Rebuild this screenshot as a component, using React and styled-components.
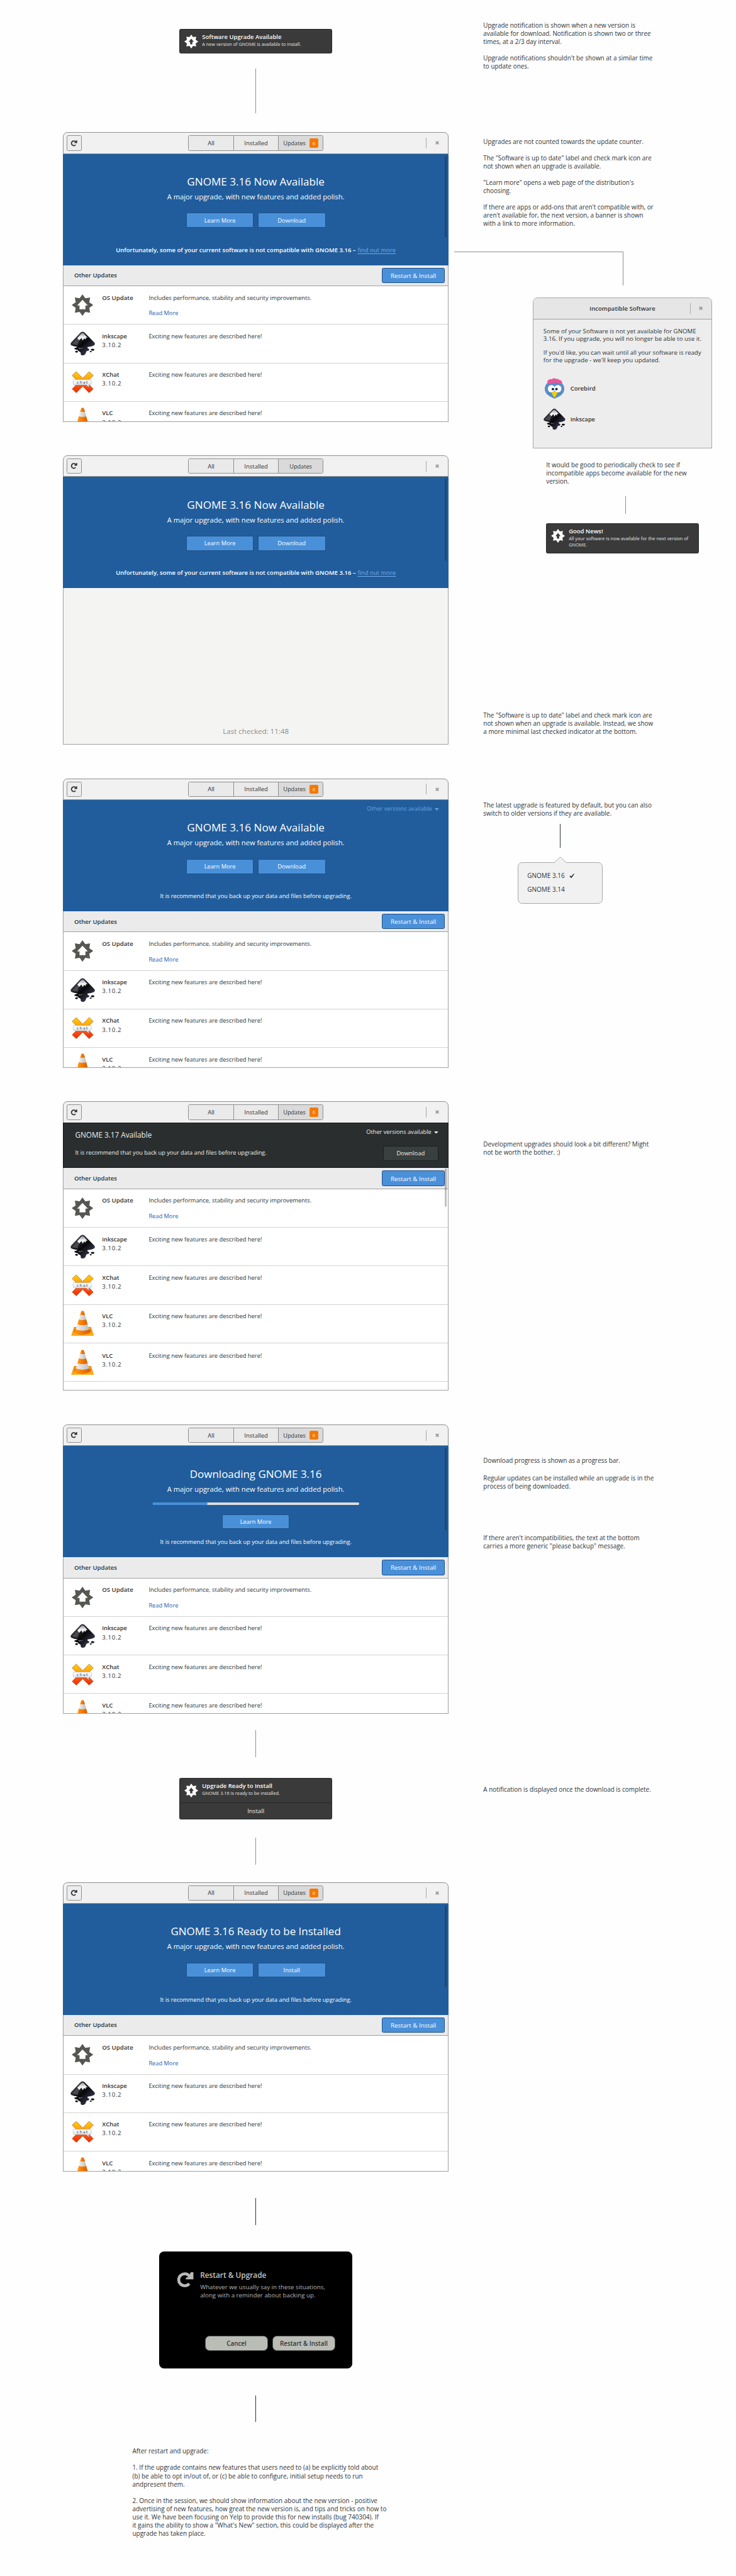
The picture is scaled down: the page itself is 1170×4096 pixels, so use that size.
import React from 'react';
import styled, { createGlobalStyle, css } from 'styled-components';

/* 1rem is ten design units, so 1.4rem reads as 14 units of the mockup board. */
const GlobalStyle = createGlobalStyle`
  html { font-size: 7.134146px; }
  body { margin: 0; background: #fefefe; }
  *, *::before, *::after { box-sizing: border-box; }
  #root {
    font-family: "Open Sans", "Noto Sans", sans-serif;
    font-size: 1.3rem;
    color: #2e3436;
  }
`;

const Board = styled.main`
  display: grid;
  grid-template-columns: 101.1rem 62.9rem;
  width: 164rem;
  height: 574rem;
  overflow: hidden;
  background: #fefefe;
`;

const FlowColumn = styled.div`
  display: flex;
  flex-direction: column;
  align-items: center;
  padding: 6.5rem 0 0 12.9rem;
`;

const NotesColumn = styled.div`
  display: flex;
  flex-direction: column;
  align-items: flex-start;
  padding-top: 4.65rem;
`;

const Note = styled.p`
  margin: ${(p) => p.$gap || 0}rem 0 -0.13rem ${(p) => p.$indent ?? 6.6}rem;
  padding-top: 0.13rem;
  font-size: ${(p) => p.$size || 1.39}rem;
  line-height: 1.833rem;
  white-space: pre;
  ${(p) => p.$start && css`align-self: flex-start;`}
`;

const Connector = styled.div`
  width: 1px;
  height: ${(p) => p.$length}rem;
  margin: ${(p) => p.$gap}rem 0 0 ${(p) => p.$indent || 0}rem;
  background: ${(p) => (p.$dark ? '#2e3436' : '#8f8f8f')};
  flex: none;
`;

const ElbowConnector = styled.div`
  width: 37.75rem;
  height: 7.5rem;
  margin: 5.43rem 0 0 0.1rem;
  border: solid #8f8f8f;
  border-width: 1px 1px 0 0;
`;

/* ---------- notifications ---------- */

const Bubble = styled.section`
  flex: none;
  width: 34rem;
  height: ${(p) => p.$height}rem;
  margin: ${(p) => p.$gap || 0}rem 0 0 ${(p) => p.$indent || 0}rem;
  display: flex;
  flex-direction: column;
  border: 1px solid #25292a;
  border-radius: 0.35rem;
  background: #3a3a3a;
  color: #eeeeec;
`;

const BubbleBody = styled.div`
  display: flex;
  height: 5.35rem;
  padding: 0.95rem 0 0 0.9rem;
  gap: 0.9rem;

  svg { width: 3.1rem; height: 3.1rem; margin-top: 0.1rem; flex: none; }
`;

const BubbleTitle = styled.h3`
  margin: -0.15rem 0 0;
  font-size: ${(p) => p.$size || 1.325}rem;
  font-weight: 600;
  line-height: 1.8rem;
  color: #fff;
  white-space: nowrap;
`;

const BubbleText = styled.p`
  margin: 0.05rem 0 0;
  font-size: 1.026rem;
  line-height: 1.34rem;
  white-space: pre;
  color: #e4e4e2;
`;

const BubbleAction = styled.div`
  flex: 1;
  display: flex;
  align-items: center;
  justify-content: center;
  border-top: 1px solid #25292a;
  font-size: 1.36rem;
`;

/* ---------- application window ---------- */

const Frame = styled.section`
  position: relative;
  flex: none;
  display: flex;
  flex-direction: column;
  width: 86rem;
  height: 64.5rem;
  margin-top: ${(p) => p.$gap}rem;
`;

const HeaderBar = styled.header`
  flex: none;
  display: grid;
  grid-template-columns: 1fr auto 1fr;
  align-items: center;
  height: 4.8rem;
  padding: 0 0.7rem;
  border: 1px solid #8f8f8f;
  border-radius: 1rem 1rem 0 0;
  background: #f1f1f1;
`;

const RefreshButton = styled.button`
  display: flex;
  align-items: center;
  justify-content: center;
  width: 3.4rem;
  height: 3.4rem;
  padding: 0;
  border: 1px solid #8f8f8f;
  border-radius: 0.35rem;
  background: #ededed;
  color: #2e3436;

  svg { width: 1.6rem; height: 1.6rem; }
`;

const Tabs = styled.nav`
  display: flex;
  height: 3.4rem;
  border: 1px solid #8f8f8f;
  border-radius: 0.35rem;
  overflow: hidden;
`;

const Tab = styled.div`
  display: flex;
  align-items: center;
  justify-content: center;
  gap: 0.8rem;
  width: 9.95rem;
  font-size: ${(p) => p.$size}rem;
  background: ${(p) => (p.$active ? '#dadada' : '#eaeaea')};

  & + & { border-left: 1px solid #8f8f8f; }
`;

const Counter = styled.span`
  display: flex;
  align-items: center;
  justify-content: center;
  width: 2rem;
  height: 2rem;
  border-radius: 0.35rem;
  background: #f57900;
  color: #fde3c6;
  font-size: 1.05rem;
`;

const WindowControls = styled.div`
  display: flex;
  align-items: center;
  justify-content: flex-end;
  gap: ${(p) => p.$space || 1.9}rem;
  padding-right: ${(p) => p.$inset || 1.3}rem;
  color: #8d8d8a;

  &::before {
    content: '';
    width: 1px;
    height: 2.4rem;
    background: #a9a9a9;
  }

  svg { width: 0.86rem; height: 0.86rem; }
`;

const Hero = styled.div`
  position: relative;
  flex: none;
  display: flex;
  flex-direction: column;
  align-items: center;
  height: 24.8rem;
  padding-top: 4.67rem;
  background: #215d9c;
  color: #fff;
`;

const HeroTitle = styled.h1`
  margin: 0;
  font-size: ${(p) => p.$size || 2.4}rem;
  font-weight: 400;
  line-height: 3.2rem;
  white-space: nowrap;
`;

const HeroSubtitle = styled.p`
  margin: 0.62rem 0 0;
  font-size: 1.565rem;
  line-height: 2.2rem;
  white-space: nowrap;
`;

const ButtonRow = styled.div`
  display: flex;
  gap: 0.9rem;
  margin-top: ${(p) => p.$gap || 2.45}rem;
`;

const Button = styled.button`
  display: flex;
  align-items: center;
  justify-content: center;
  width: ${(p) => p.$width || 15.1}rem;
  height: ${(p) => p.$height || 3.35}rem;
  padding: 0;
  border: 1px solid ${(p) => (p.$dark ? '#1b1f20' : p.$edge || '#1c5187')};
  border-radius: 0.35rem;
  background: ${(p) => (p.$dark ? '#393f3f' : '#4a90d9')};
  color: ${(p) => (p.$dark ? '#eeeeec' : '#fff')};
  font-family: inherit;
  font-size: ${(p) => p.$size || 1.32}rem;
  white-space: nowrap;
`;

const ProgressTrack = styled.div`
  width: 46rem;
  height: 0.65rem;
  margin-top: 1.85rem;
  border-radius: 0.3rem;
  background: #dcdcdc;
  overflow: hidden;
`;

const ProgressFill = styled.div`
  width: 26.7%;
  height: 100%;
  border-radius: 0.3rem;
  background: #4a90d9;
`;

const Advice = styled.p`
  display: flex;
  gap: 0.4rem;
  margin: ${(p) => p.$gap || 4.15}rem 0 0;
  font-size: ${(p) => (p.$strong ? 1.337 : 1.289)}rem;
  font-weight: ${(p) => (p.$strong ? 600 : 400)};
  line-height: 1.8rem;
  white-space: nowrap;
`;

const InlineLink = styled.a`
  font-size: 1.328rem;
  font-weight: 400;
  color: #74abe6;
  text-decoration: underline;
  text-decoration-thickness: 1px;
  text-underline-offset: 0.35rem;
`;

const VersionPicker = styled.div`
  display: flex;
  align-items: center;
  gap: 0.6rem;
  font-size: 1.292rem;
  line-height: 1.8rem;
  color: ${(p) => (p.$light ? '#eeeeec' : '#66a3e4')};
  white-space: nowrap;

  svg { width: 0.95rem; height: 0.55rem; }
`;

const CornerPicker = styled(VersionPicker)`
  position: absolute;
  top: 1.2rem;
  right: 2.2rem;
`;

const DevBanner = styled.div`
  flex: none;
  display: flex;
  justify-content: space-between;
  height: 10.2rem;
  margin-top: -1px;
  padding: 1.2rem 2.2rem 0 2.6rem;
  border: 1px solid #16191a;
  background: #2a2e2f;
  color: #eeeeec;
`;

const DevText = styled.div`
  padding-top: 0.4rem;
`;

const DevTitle = styled.h2`
  margin: 0;
  font-size: 1.647rem;
  font-weight: 400;
  line-height: 2.2rem;
`;

const DevActions = styled.div`
  display: flex;
  flex-direction: column;
  align-items: flex-end;
  gap: 2.1rem;
`;

const Pane = styled.div`
  flex: 1;
  min-height: 0;
  overflow: hidden;
  border: 1px solid #a0a0a0;
  border-top: 0;
  background: ${(p) => (p.$idle ? '#f4f4f3' : '#fff')};
`;

const IdlePane = styled(Pane)`
  display: flex;
  align-items: flex-end;
  justify-content: center;
  padding-bottom: 1.8rem;
  font-size: 1.62rem;
  line-height: 2.2rem;
  color: #8d8d8a;
`;

const SectionBar = styled.div`
  display: flex;
  align-items: center;
  justify-content: space-between;
  height: 4.7rem;
  padding: 0 0.75rem 0 2.4rem;
  border-bottom: 1px solid #a0a0a0;
  background: #ebebeb;
  font-size: 1.34rem;
  font-weight: 600;
`;

const UpdateRow = styled.article`
  display: grid;
  grid-template-columns: 8.6rem 10.4rem 1fr;
  height: 8.59rem;
  border-bottom: 1px solid #d3d3d3;
  padding-top: ${(p) => p.$shift || 0}rem;
  font-size: 1.315rem;
  line-height: 1.97rem;
`;

const RowIcon = styled.div`
  display: flex;
  align-items: center;
  justify-content: center;

  svg { width: ${(p) => p.$w}rem; height: ${(p) => p.$h}rem; margin-top: ${(p) => p.$lift || 0}rem; }
`;

const RowCell = styled.div`
  padding-top: 1.62rem;
  white-space: nowrap;
`;

const AppName = styled.div`
  font-size: ${(p) => p.$size || 1.34}rem;
  font-weight: 600;
`;

const AppVersion = styled.div`
  font-size: 1.36rem;
  letter-spacing: 0.09rem;
`;

const ReadMore = styled.a`
  display: block;
  margin-top: 1.5rem;
  font-size: 1.3rem;
  color: #2a5ca8;
`;

const Scrollbar = styled.div`
  position: absolute;
  top: ${(p) => p.$top}rem;
  right: 0.5rem;
  width: 0.45rem;
  height: ${(p) => p.$length}rem;
  border-radius: ${(p) => (p.$grey ? '0 0 0.2rem 0.2rem' : '0.2rem')};
  background: ${(p) => (p.$grey ? 'rgba(0, 0, 0, 0.25)' : '#1a4879')};
`;

/* ---------- incompatible software dialog ---------- */

const Dialog = styled.section`
  flex: none;
  width: 40rem;
  height: 33.7rem;
  margin: 2.7rem 0 0 17.6rem;
  border: 1px solid #a8a8a8;
  border-radius: 1rem 1rem 0 0;
  background: #ededed;
  overflow: hidden;
`;

const DialogHeader = styled.header`
  display: grid;
  grid-template-columns: 1fr auto 1fr;
  align-items: center;
  height: 4.75rem;
  border-bottom: 1px solid #a0a0a0;
  background: #e6e6e6;
  font-size: 1.34rem;
  font-weight: 600;
`;

const DialogBody = styled.div`
  padding: 1.8rem 0 0 2.25rem;
`;

const DialogText = styled.p`
  margin: 0 0 1.22rem;
  font-size: ${(p) => p.$size}rem;
  line-height: 1.78rem;
  white-space: pre;
`;

const AppEntry = styled.div`
  display: flex;
  align-items: center;
  height: 5rem;
  margin-top: ${(p) => p.$gap}rem;
  font-size: ${(p) => p.$size || 1.34}rem;
  font-weight: 600;
`;

const EntryIcon = styled.span`
  display: flex;
  justify-content: center;
  width: 5rem;
  margin-right: 1rem;

  svg { width: ${(p) => p.$w}rem; height: ${(p) => p.$h}rem; }
`;

/* ---------- version popover ---------- */

const Popover = styled.div`
  position: relative;
  width: 18.9rem;
  height: 9.3rem;
  margin: 3.2rem 0 0 14.3rem;
  padding: 1.4rem 0 0 1.95rem;
  border: 1px solid #a8a8a8;
  border-radius: 1rem;
  background: #f1f1f1;
`;

const PopoverTip = styled.svg`
  position: absolute;
  top: -1.4rem;
  left: 7.85rem;
  width: 3rem;
  height: 1.55rem;
`;

const PopoverItem = styled.div`
  display: flex;
  align-items: center;
  gap: 1rem;
  font-size: 1.407rem;
  line-height: 3.07rem;

  svg { width: 1.15rem; height: 1.05rem; }
`;

/* ---------- session dialog ---------- */

const SessionDialog = styled.section`
  flex: none;
  display: flex;
  flex-direction: column;
  width: 43rem;
  height: 26rem;
  margin-top: 6rem;
  padding: 4.1rem 3.8rem 3.95rem 3.7rem;
  border-radius: 1.1rem;
  background: #000;
  color: #b4b4b2;
`;

const SessionMessage = styled.div`
  flex: 1;
  display: flex;
  gap: 1.3rem;

  svg { width: 4.1rem; height: 4.1rem; color: #b9b9b7; }
`;

const SessionTitle = styled.h2`
  margin: 0;
  font-size: 1.66rem;
  font-weight: 600;
  line-height: 2.2rem;
  color: #c6c6c4;
`;

const SessionText = styled.p`
  margin: 0.6rem 0 0;
  font-size: 1.366rem;
  line-height: 1.83rem;
  white-space: pre;
`;

const SessionActions = styled.div`
  display: flex;
  justify-content: flex-end;
  gap: 1rem;
`;

const PillButton = styled.button`
  width: 14rem;
  height: 3.35rem;
  padding: 0;
  border: 1px solid #50544f;
  border-radius: 1rem;
  background: #babdb6;
  color: #2e3436;
  font-family: inherit;
  font-size: 1.38rem;
  font-weight: 600;
`;

/* ---------- icons ---------- */

const starPoints = (radius, inner) =>
  Array.from({ length: 16 }, (_, i) => {
    const r = i % 2 ? inner : radius;
    const a = (i * Math.PI) / 8;
    return `${(24 + r * Math.sin(a)).toFixed(2)},${(24 - r * Math.cos(a)).toFixed(2)}`;
  }).join(' ');

const UpdateStar = ({ fill, arrow, narrow }) => (
  <svg viewBox="0 0 48 48">
    <polygon points={starPoints(24, 16.4)} fill={fill} />
    <path
      d={narrow
        ? 'M24 14.2L33 25H27.8V33.4H20.2V25H15Z'
        : 'M24 12.2L36 25H30.6V33.4H17.4V25H12Z'}
      fill={arrow}
    />
  </svg>
);

const RefreshIcon = () => (
  <svg viewBox="0 0 16 16" fill="none">
    <path d="M11.4 11.6A5.2 5.2 0 1 1 11.7 5.2" stroke="currentColor" strokeWidth="2.5" />
    <path d="M15 1.6V7.8H8.4V6.6L10.6 5.6L12.8 1.6Z" fill="currentColor" />
  </svg>
);

const CloseIcon = () => (
  <svg viewBox="0 0 10 10">
    <path d="M1.2 1.2L8.8 8.8M8.8 1.2L1.2 8.8" stroke="currentColor" strokeWidth="2.4" />
  </svg>
);

const CaretIcon = () => (
  <svg viewBox="0 0 10 6"><path d="M0 0H10L5 6Z" fill="currentColor" /></svg>
);

const CheckIcon = () => (
  <svg viewBox="0 0 12 11">
    <path d="M0.5 6.6L2.4 4.7L4.6 6.6L9.6 0.6L11.8 0.9L5.2 10.2H4.2Z" fill="#2e3436" />
  </svg>
);

const InkscapeIcon = () => (
  <svg viewBox="0 0 55 54">
    <defs>
      <linearGradient id="inkBody" x1="0" y1="0" x2="1" y2="1">
        <stop offset="0.2" stopColor="#3a3a40" />
        <stop offset="0.5" stopColor="#08080a" />
        <stop offset="0.8" stopColor="#34364a" />
        <stop offset="1" stopColor="#0a0a0e" />
      </linearGradient>
      <linearGradient id="inkSnow" x1="0" y1="0" x2="0" y2="1">
        <stop offset="0" stopColor="#8e9096" />
        <stop offset="0.5" stopColor="#e8eaec" />
        <stop offset="1" stopColor="#ffffff" />
      </linearGradient>
    </defs>
    <path
      d="M22.6 2.6Q27 -1.2 31.4 2.6L53 24.6Q56.4 28.8 52 31.6Q46 34 38.5 34.8Q36.4 36.4 40.4 38.6Q44 41 40 43.2Q35 43.6 34.6 47Q33.4 52.6 28 53.4Q22.4 53 22.8 49.6Q24 47 20 45Q15.6 43.4 16.6 41.4Q12 41.2 9.2 39.2Q7 37.4 12 36.2Q16 35.4 15.4 34.2Q8 33.4 3 31.4Q-1.6 29 1.6 24.6Z"
      fill="url(#inkBody)"
    />
    <path
      d="M24.4 4.6Q27 2.2 29.6 4.6L38.6 14.2L34.6 13.2L34 18L30.4 15.4L27.4 20.2L24.6 14.6L21.6 17.4L19.4 20L15.2 14.6Z"
      fill="url(#inkSnow)"
    />
    <path d="M15.2 15.6L19 21L16 31Q9 30 4.4 27.8Z" fill="#84868e" opacity="0.4" />
    <path d="M17 36.6Q24 38 29 36.2Q26 38.8 19 38.4Z" fill="#c9cace" opacity="0.7" />
    <ellipse cx="49.4" cy="40.8" rx="4" ry="2.2" fill="#101014" />
    <ellipse cx="45.2" cy="45" rx="2.2" ry="1.6" fill="#101014" />
    <ellipse cx="13.6" cy="45.2" rx="3" ry="2" fill="#101014" />
  </svg>
);

const ChatIcon = () => (
  <svg viewBox="0 0 50 50">
    <defs>
      <linearGradient id="chatFill" x1="0" y1="0" x2="0" y2="1">
        <stop offset="0" stopColor="#ffd000" />
        <stop offset="0.42" stopColor="#fb9d12" />
        <stop offset="0.6" stopColor="#fa5a1a" />
        <stop offset="1" stopColor="#f02800" />
      </linearGradient>
      <linearGradient id="chatBubble" x1="0" y1="0" x2="0" y2="1">
        <stop offset="0" stopColor="#ffffff" />
        <stop offset="1" stopColor="#cfdcea" />
      </linearGradient>
    </defs>
    <path
      d="M10.4 1L25 16L39.6 1L49 9.6L34.4 25L49 40.4L39.6 49L25 34.4L10.4 49L1 40.4L15.6 25L1 9.6Z"
      fill="url(#chatFill)"
      stroke="#b0501c"
      strokeWidth="0.9"
    />
    <path
      d="M7 19H41Q45 19 45 23V27Q45 31 41 31H38.6L38.8 36.4L33.4 31H7Q3 31 3 27V23Q3 19 7 19Z"
      fill="url(#chatBubble)"
      stroke="#9fb0c4"
      strokeWidth="0.8"
    />
    <text x="25" y="28" textAnchor="middle" fontFamily="DejaVu Sans, sans-serif" fontSize="8.6" letterSpacing="2" fill="#2e3436">chat</text>
  </svg>
);

const ConeIcon = () => (
  <svg viewBox="0 0 51 56">
    <defs>
      <linearGradient id="coneOrange" x1="0" y1="0" x2="1" y2="0">
        <stop offset="0" stopColor="#ff9a1c" />
        <stop offset="0.5" stopColor="#f57900" />
        <stop offset="1" stopColor="#d65c00" />
      </linearGradient>
      <linearGradient id="coneWhite" x1="0" y1="0" x2="1" y2="0">
        <stop offset="0" stopColor="#f2f2f2" />
        <stop offset="1" stopColor="#bdbfbd" />
      </linearGradient>
      <linearGradient id="coneBase" x1="0" y1="0" x2="0" y2="1">
        <stop offset="0" stopColor="#f58a10" />
        <stop offset="1" stopColor="#ffae1a" />
      </linearGradient>
    </defs>
    <path d="M6.6 36.6H44.4L51 56H0Z" fill="url(#coneBase)" />
    <path d="M8 42L43 42L45 47Q38 53.6 25.5 53.6Q13 53.6 6 47Z" fill="#c85c04" opacity="0.55" />
    <path d="M22.6 1.4Q25.5 -0.8 28.4 1.4L31 9.4Q25.5 11 20 9.4Z" fill="url(#coneOrange)" />
    <path d="M20 9.4Q25.5 11 31 9.4L33.8 19.8Q25.5 22 17.2 19.8Z" fill="url(#coneWhite)" />
    <path d="M17.2 19.8Q25.5 22 33.8 19.8L37 31Q25.5 34.6 14 31Z" fill="url(#coneOrange)" />
    <path d="M14 31Q25.5 34.6 37 31L40.4 42Q25.5 47.6 10.6 42Z" fill="url(#coneWhite)" />
    <path d="M10.6 42Q25.5 47.6 40.4 42L42.4 48Q37 52.2 25.5 52.2Q14 52.2 8.6 48Z" fill="url(#coneOrange)" />
  </svg>
);

const BirdIcon = () => (
  <svg viewBox="0 0 44 46">
    <path d="M22 5C35 5 44 14 44 24C44 36 34 42 22 46C10 42 0 36 0 24C0 14 9 5 22 5Z" fill="#5a8cc6" />
    <circle cx="15" cy="24" r="8.2" fill="#fff" />
    <circle cx="29.4" cy="24" r="8.2" fill="#fff" />
    <circle cx="18.4" cy="25" r="2.9" fill="#16294a" />
    <circle cx="26.4" cy="25" r="2.9" fill="#16294a" />
    <path d="M15.6 32.4Q22 27.6 28.4 32.4Q27.4 39 22 44Q16.6 39 15.6 32.4Z" fill="#ecd30e" />
    <path d="M6 11Q5 5 10 3.4Q12 1.6 16 2.4Q20 -1.4 26 2Q31 1 32.4 4Q39 5 39.4 11Q39 13 36 12.4Q22 8.4 9 12.8Q6.4 13.4 6 11Z" fill="#e8589a" />
  </svg>
);

/* ---------- composition ---------- */

const APPS = {
  os: { name: 'OS Update', size: 1.353, icon: <UpdateStar fill="#555753" arrow="#fff" />, w: 4.8, h: 4.8 },
  inkscape: { name: 'Inkscape', size: 1.3, icon: <InkscapeIcon />, w: 5.5, h: 5.4 },
  xchat: { name: 'XChat', icon: <ChatIcon />, w: 4.9, h: 5 },
  vlc: { name: 'VLC', icon: <ConeIcon />, w: 5.1, h: 5.6, lift: -0.3 },
};

const Update = ({ app, shift }) => {
  const a = APPS[app];
  return (
    <UpdateRow $shift={shift}>
      <RowIcon $w={a.w} $h={a.h} $lift={a.lift}>{a.icon}</RowIcon>
      <RowCell>
        <AppName $size={a.size}>{a.name}</AppName>
        {app !== 'os' && <AppVersion>3.10.2</AppVersion>}
      </RowCell>
      <RowCell>
        {app === 'os' ? (
          <>
            Includes performance, stability and security improvements.
            <ReadMore>Read More</ReadMore>
          </>
        ) : 'Exciting new features are described here!'}
      </RowCell>
    </UpdateRow>
  );
};

const UpdateList = ({ apps = ['os', 'inkscape', 'xchat', 'vlc'] }) => (
  <Pane>
    <SectionBar>
      Other Updates
      <Button $width={14} $height={3.45} $size={1.379} $edge="#1c4f88">Restart &amp; Install</Button>
    </SectionBar>
    {apps.map((app, i) => <Update key={i} app={app} shift={i === 4 ? 0.2 : 0} />)}
  </Pane>
);

const SoftwareWindow = ({ gap, counter = true, children }) => (
  <Frame $gap={gap}>
    <HeaderBar>
      <RefreshButton><RefreshIcon /></RefreshButton>
      <Tabs>
        <Tab $size={1.32}>All</Tab>
        <Tab $size={1.334}>Installed</Tab>
        <Tab $size={1.285} $active>Updates{counter && <Counter>6</Counter>}</Tab>
      </Tabs>
      <WindowControls><CloseIcon /></WindowControls>
    </HeaderBar>
    {children}
  </Frame>
);

const UpgradeHero = ({ title, titleSize, action, actionSize, incompatible, progress, picker }) => (
  <Hero>
    {picker && <CornerPicker>Other versions available<CaretIcon /></CornerPicker>}
    <HeroTitle $size={titleSize}>{title}</HeroTitle>
    <HeroSubtitle>A major upgrade, with new features and added polish.</HeroSubtitle>
    {progress && <ProgressTrack><ProgressFill /></ProgressTrack>}
    <ButtonRow $gap={progress ? 2 : 2.45}>
      <Button $size={1.295}>Learn More</Button>
      {action && <Button $size={actionSize || 1.33}>{action}</Button>}
    </ButtonRow>
    {incompatible ? (
      <Advice $strong>
        Unfortunately, some of your current software is not compatible with GNOME 3.16 –
        <InlineLink>find out more</InlineLink>
      </Advice>
    ) : (
      <Advice $gap={progress ? 2.1 : 4.15}>
        It is recommend that you back up your data and files before upgrading.
      </Advice>
    )}
  </Hero>
);

const Notification = ({ title, titleSize, text, action, ...place }) => (
  <Bubble {...place}>
    <BubbleBody>
      <UpdateStar fill="#fff" arrow="#3a3a3a" narrow />
      <div>
        <BubbleTitle $size={titleSize}>{title}</BubbleTitle>
        <BubbleText>{text}</BubbleText>
      </div>
    </BubbleBody>
    {action && <BubbleAction>{action}</BubbleAction>}
  </Bubble>
);

export default function App() {
  return (
    <>
      <GlobalStyle />
      <Board>
        <FlowColumn>
          <Notification $height={5.4} title="Software Upgrade Available" text="A new version of GNOME is available to install." />
          <Connector $gap={3.4} $length={10} />

          <SoftwareWindow gap={4.2}>
            <UpgradeHero title="GNOME 3.16 Now Available" action="Download" incompatible />
            <UpdateList />
            <Scrollbar $top={5.2} $length={18.3} />
          </SoftwareWindow>

          <SoftwareWindow gap={7.5} counter={false}>
            <UpgradeHero title="GNOME 3.16 Now Available" action="Download" incompatible />
            <IdlePane $idle>Last checked: 11:48</IdlePane>
            <Scrollbar $top={5.2} $length={18.3} />
          </SoftwareWindow>

          <SoftwareWindow gap={7.5}>
            <UpgradeHero title="GNOME 3.16 Now Available" action="Download" picker />
            <UpdateList />
          </SoftwareWindow>

          <SoftwareWindow gap={7.5}>
            <DevBanner>
              <DevText>
                <DevTitle>GNOME 3.17 Available</DevTitle>
                <Advice $gap={2.05}>It is recommend that you back up your data and files before upgrading.</Advice>
              </DevText>
              <DevActions>
                <VersionPicker $light>Other versions available<CaretIcon /></VersionPicker>
                <Button $dark $width={12.3} $size={1.33}>Download</Button>
              </DevActions>
            </DevBanner>
            <UpdateList apps={['os', 'inkscape', 'xchat', 'vlc', 'vlc']} />
            <Scrollbar $grey $top={15} $length={8.5} />
          </SoftwareWindow>

          <SoftwareWindow gap={7.5}>
            <UpgradeHero title="Downloading GNOME 3.16" titleSize={2.379} progress />
            <UpdateList />
            <Scrollbar $top={5.2} $length={18.3} />
          </SoftwareWindow>

          <Connector $gap={3.6} $length={6} />
          <Notification
            $gap={4.7}
            $height={9.2}
            title="Upgrade Ready to Install"
            text="GNOME 3.16 is ready to be installed."
            action="Install"
          />
          <Connector $gap={4.1} $length={6} />

          <SoftwareWindow gap={3.9}>
            <UpgradeHero title="GNOME 3.16 Ready to be Installed" titleSize={2.379} action="Install" />
            <UpdateList />
            <Scrollbar $top={5.2} $length={18.3} />
          </SoftwareWindow>

          <Connector $gap={5.9} $length={6} $dark />
          <SessionDialog>
            <SessionMessage>
              <RefreshIcon />
              <div>
                <SessionTitle>Restart &amp; Upgrade</SessionTitle>
                <SessionText>{'Whatever we usually say in these situations,\nalong with a reminder about backing up.'}</SessionText>
              </div>
            </SessionMessage>
            <SessionActions>
              <PillButton>Cancel</PillButton>
              <PillButton>Restart &amp; Install</PillButton>
            </SessionActions>
          </SessionDialog>
          <Connector $gap={6} $length={6} $dark />

          <Note $start $gap={5.45} $indent={16.6} $size={1.399}>
            {`After restart and upgrade:

1. If the upgrade contains new features that users need to (a) be explicitly told about
(b) be able to opt in/out of, or (c) be able to configure, initial setup needs to run
andpresent them.

2. Once in the session, we should show information about the new version - positive
advertising of new features, how great the new version is, and tips and tricks on how to
use it. We have been focusing on Yelp to provide this for new installs (bug 740304). If
it gains the ability to show a "What's New" section, this could be displayed after the
upgrade has taken place.`}
          </Note>
        </FlowColumn>

        <NotesColumn>
          <Note>
            {`Upgrade notification is shown when a new version is
available for download. Notification is shown two or three
times, at a 2/3 day interval.

Upgrade notifications shouldn't be shown at a similar time
to update ones.`}
          </Note>
          <Note $gap={14.85} $size={1.385}>
            {`Upgrades are not counted towards the update counter.

The "Software is up to date" label and check mark icon are
not shown when an upgrade is available.

"Learn more" opens a web page of the distribution's
choosing.

If there are apps or add-ons that aren't compatible with, or
aren't available for, the next version, a banner is shown
with a link to more information.`}
          </Note>
          <ElbowConnector />
          <Dialog>
            <DialogHeader>
              <span />
              Incompatible Software
              <WindowControls $space={1.8} $inset={2}><CloseIcon /></WindowControls>
            </DialogHeader>
            <DialogBody>
              <DialogText $size={1.36}>{'Some of your Software is not yet available for GNOME\n3.16. If you upgrade, you will no longer be able to use it.'}</DialogText>
              <DialogText $size={1.36}>{"If you'd like, you can wait until all your software is ready\nfor the upgrade - we'll keep you updated."}</DialogText>
              <AppEntry $gap={2.7}><EntryIcon $w={4.35} $h={4.6}><BirdIcon /></EntryIcon>Corebird</AppEntry>
              <AppEntry $gap={1.97} $size={1.29}><EntryIcon $w={4.9} $h={4.9}><InkscapeIcon /></EntryIcon>Inkscape</AppEntry>
            </DialogBody>
          </Dialog>
          <Note $gap={2.6} $indent={20.6}>
            {`It would be good to periodically check to see if
incompatible apps become available for the new
version.`}
          </Note>
          <Connector $gap={2.5} $length={4} $indent={38.2} />
          <Notification
            $gap={2.1}
            $height={6.7}
            $indent={20.6}
            title="Good News!"
            text={'All your software is now available for the next version of\nGNOME.'}
          />
          <Note $gap={35.05}>
            {`The "Software is up to date" label and check mark icon are
not shown when an upgrade is available. Instead, we show
a more minimal last checked indicator at the bottom.`}
          </Note>
          <Note $gap={14.55}>
            {`The latest upgrade is featured by default, but you can also
switch to older versions if they are available.`}
          </Note>
          <Connector $gap={1.54} $length={5.3} $indent={23.7} $dark />
          <Popover>
            <PopoverTip viewBox="0 0 30 15.5">
              <path d="M0 15.5L1 14L15 1L29 14L30 15.5Z" fill="#f1f1f1" />
              <path d="M0.5 14.2L15 1L29.5 14.2" fill="none" stroke="#a8a8a8" strokeWidth="1.3" />
            </PopoverTip>
            <PopoverItem>GNOME 3.16<CheckIcon /></PopoverItem>
            <PopoverItem>GNOME 3.14</PopoverItem>
          </Popover>
          <Note $gap={52.5}>
            {`Development upgrades should look a bit different? Might
not be worth the bother. :)`}
          </Note>
          <Note $gap={66.86}>Download progress is shown as a progress bar.</Note>
          <Note $gap={2.14}>
            {`Regular updates can be installed while an upgrade is in the
process of being downloaded.`}
          </Note>
          <Note $gap={9.61}>
            {`If there aren't incompatibilities, the text at the bottom
carries a more generic "please backup" message.`}
          </Note>
          <Note $gap={52.41}>A notification is displayed once the download is complete.</Note>
        </NotesColumn>
      </Board>
    </>
  );
}
